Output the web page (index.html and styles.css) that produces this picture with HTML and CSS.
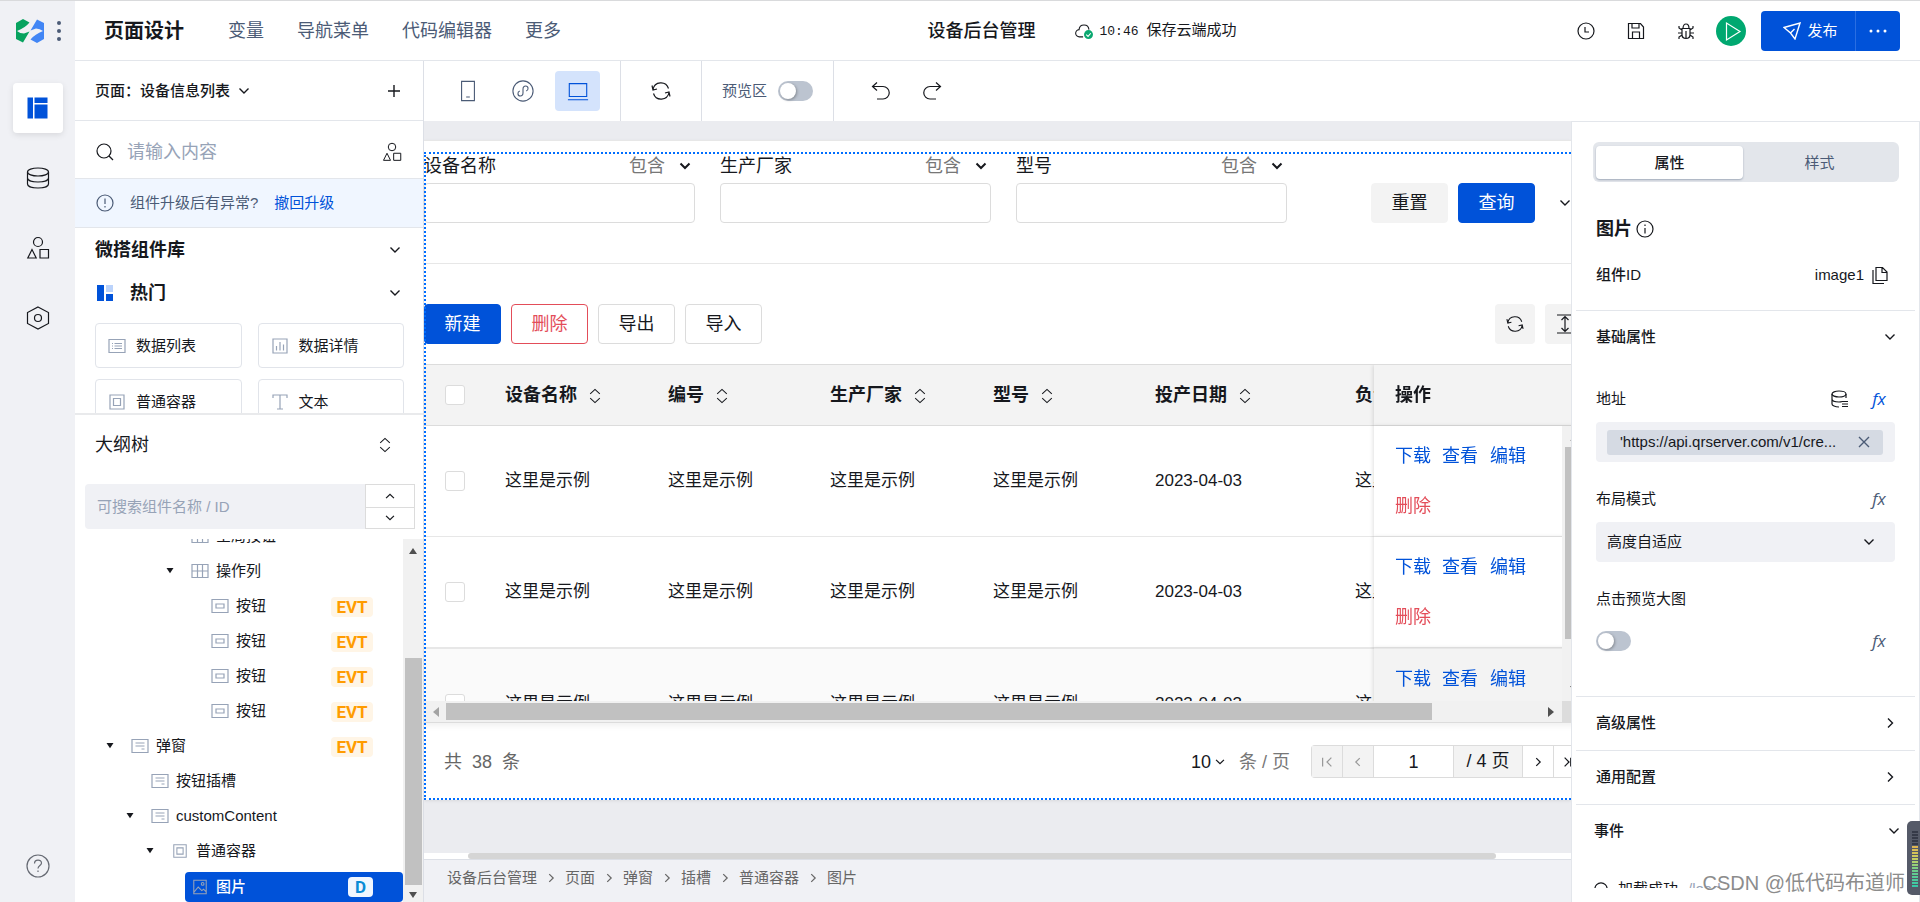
FILE: index.html
```html
<!DOCTYPE html>
<html lang="zh-CN">
<head>
<meta charset="utf-8">
<title>设备后台管理 - 页面设计</title>
<link rel="stylesheet" href="styles.css">
</head>
<body>
<svg class="sprite" aria-hidden="true">
  <symbol id="chev-down" viewBox="0 0 16 16"><path d="M3.500 5.500 8 10l4.500-4.500"/></symbol>
  <symbol id="chev-up" viewBox="0 0 16 16"><path d="M3.500 10.500 8 6l4.500 4.500"/></symbol>
  <symbol id="chev-right" viewBox="0 0 16 16"><path d="M6 3.500 10.500 8 6 12.500"/></symbol>
  <symbol id="chev-left" viewBox="0 0 16 16"><path d="M10 3.500 5.500 8l4.500 4.500"/></symbol>
  <symbol id="sort" viewBox="0 0 16 18"><path d="M2.500 6.500 8 1.500l5.500 5M2.500 11.500 8 16.500l5.500-5"/></symbol>
  <symbol id="shapes" viewBox="0 0 24 24"><circle cx="12" cy="6" r="4.500"/><path d="M6 13.500 1.800 22h8.400zM14 13.500h8.500V22H14z"/></symbol>
  <symbol id="refresh" viewBox="0 0 20 20"><path d="M2 8.500A8 8 0 0 1 17.500 7.500M18 11.500A8 8 0 0 1 2.500 12.500M1 4.500l1 4.500 4-1M19 15.500l-1-4.500-4 1"/></symbol>
  <symbol id="caret" viewBox="0 0 10 8"><path d="M1 1h8L5 7z"/></symbol>
  <symbol id="t-grid" viewBox="0 0 18 16"><path d="M1 1.500h16v13H1zM1 8h16M6.500 1.500v13M11.500 1.500v13"/></symbol>
  <symbol id="t-button" viewBox="0 0 18 16"><path d="M1 1.500h16v13H1zM5 6h8v4H5z"/></symbol>
  <symbol id="t-slot" viewBox="0 0 18 16"><path d="M1 1.500h16v13H1zM4.500 5h9M4.500 8h9M10.500 11h3"/></symbol>
  <symbol id="t-box" viewBox="0 0 18 18"><path d="M2 2h14v14H2zM5.500 5.500h7v7h-7z"/></symbol>
  <symbol id="t-image" viewBox="0 0 18 18"><path d="M2 1.500h14v15H2zM2 15l5-6 4 4 2-1.500 3 3"/><circle cx="12" cy="5.500" r="1.500"/></symbol>
</svg>

<div class="app">
  <nav class="rail" aria-label="主导航">
    <div class="rail-brand">
      <svg class="logo" viewBox="0 0 28 24"><path fill="#07a35f" d="M0 4 7 0l6.500 3.500Q9 9 1 12q3 2.500 7 2.500l5.500-2L7 23.500 0 20z"/><path fill="#4286f5" d="M28 20l-7 4-6.500-3.500Q19 15 27 12q-3-2.500-7-2.500l-5.500 2L21 .500 28 4z"/></svg>
      <svg class="dots" viewBox="0 0 4 22"><circle cx="2" cy="3" r="2"/><circle cx="2" cy="11" r="2"/><circle cx="2" cy="19" r="2"/></svg>
    </div>
    <button class="rail-btn is-active" aria-label="页面"><svg viewBox="0 0 24 24"><path class="fill-blue" d="M1.500 1.500H7v21H1.500zM8.500 8.500h13v14h-13zM8.500 1.500h13V7h-13z"/></svg></button>
    <button class="rail-btn" aria-label="数据"><svg viewBox="0 0 24 24"><ellipse cx="12" cy="6" rx="10.500" ry="4"/><path d="M1.500 6v12c0 5.300 21 5.300 21 0V6M1.500 12c0 5.300 21 5.300 21 0"/></svg></button>
    <button class="rail-btn" aria-label="组件"><svg><use href="#shapes"/></svg></button>
    <button class="rail-btn" aria-label="设置"><svg viewBox="0 0 24 24"><path d="M12 1l10.500 5.500v11L12 23 1.500 17.500v-11z"/><circle cx="12" cy="12" r="3.500"/></svg></button>
    <button class="rail-btn rail-help" aria-label="帮助"><svg viewBox="0 0 24 24"><circle cx="12" cy="12" r="11"/><path d="M8.500 9.500c0-4.500 7-4.500 7-.500 0 2.500-3.500 2.500-3.500 5.500M12 16.500V18"/></svg></button>
  </nav>

  <div class="main">
    <header class="topbar">
      <h1>页面设计</h1>
      <nav class="menu"><a href="#">变量</a><a href="#">导航菜单</a><a href="#">代码编辑器</a><a href="#">更多</a></nav>
      <strong class="app-name">设备后台管理</strong>
      <div class="saved">
        <svg viewBox="0 0 20 18"><path d="M9 15.500H5a4 4 0 0 1-.500-8C5 .500 15 .500 15.500 7.500"/><circle class="fill-green" cx="15" cy="13" r="5"/><path class="stroke-white" d="M12.500 13l2 2 3-3.500"/></svg>
        <span><span class="time">10:46</span>保存云端成功</span>
      </div>
      <div class="tools">
        <button class="tool" aria-label="历史"><svg viewBox="0 0 18 18"><circle cx="9" cy="9" r="8"/><path d="M8 5v5h4"/></svg></button>
        <button class="tool" aria-label="保存"><svg viewBox="0 0 18 18"><path d="M1.500 1.500h12L16.500 5v11.500h-15zM5 1.500V6h7V1.500M5.500 16.500V10h7v6.500"/></svg></button>
        <button class="tool" aria-label="调试"><svg viewBox="0 0 18 18"><path d="M5 6.500h8v6c0 5.300-8 5.300-8 0zM6 6.500c0-6 6-6 6 0M9 9v7M5 8 2 6V4M13 8l3-2V4M5 11H1M13 11h4M5 13l-3 2v2M13 13l3 2v2"/></svg></button>
        <button class="play" aria-label="预览"><svg viewBox="0 0 30 30"><path d="M10.500 7v17L24 15.500z"/></svg></button>
        <div class="publish">
          <button class="publish-main"><svg viewBox="0 0 18 18"><path d="M1 5.500 17 1l-5 16-4.500-6zM7.500 11l4-4"/></svg>发布</button>
          <button class="publish-more" aria-label="更多操作"><svg viewBox="0 0 18 4"><circle cx="2" cy="2" r="1.500"/><circle cx="9" cy="2" r="1.500"/><circle cx="16" cy="2" r="1.500"/></svg></button>
        </div>
      </div>
    </header>

    <div class="workspace">
      <aside class="left">
        <div class="page-pick">
          <button class="page-name">页面：设备信息列表 <svg class="ic"><use href="#chev-down"/></svg></button>
          <button aria-label="新建页面"><svg class="ic" viewBox="0 0 16 16"><path d="M8 2v12M2 8h12"/></svg></button>
        </div>
        <div class="search">
          <svg class="ic-18" viewBox="0 0 18 18"><circle cx="8" cy="8" r="7"/><path d="m13 13 4 4"/></svg>
          <input type="text" aria-label="搜索组件" placeholder="请输入内容">
          <button aria-label="组件分类"><svg class="ic-20"><use href="#shapes"/></svg></button>
        </div>
        <div class="notice">
          <svg class="ic-18" viewBox="0 0 18 18"><circle cx="9" cy="9" r="8"/><path d="M9 4.500V10M9 12v1.500"/></svg>
          <span>组件升级后有异常?</span><a href="#">撤回升级</a>
        </div>
        <section class="library">
          <button class="lib-head">微搭组件库<svg class="ic"><use href="#chev-down"/></svg></button>
          <button class="lib-head"><svg class="hot" viewBox="0 0 16 16"><path fill="#0052d9" d="M0 0h7v16H0zM9 9h7v7H9z"/><path fill="#bbd3fb" d="M9 0h7v7H9z"/></svg>热门<svg class="ic"><use href="#chev-down"/></svg></button>
          <div class="cards">
            <button class="card"><svg viewBox="0 0 18 18"><path d="M1 2.500h16v13H1zM4 6.500h1M4 9h1M4 11.500h1M6.500 6.500H14M6.500 9H14M6.500 11.500H14"/></svg>数据列表</button>
            <button class="card"><svg viewBox="0 0 18 18"><path d="M2 2h14v14H2zM5.500 9v4.500M9 5v8.500M12.500 7.500v6"/></svg>数据详情</button>
            <button class="card"><svg><use href="#t-box"/></svg>普通容器</button>
            <button class="card"><svg viewBox="0 0 18 18"><path d="M2 5V2h14v3M9 2v14M6 16h6"/></svg>文本</button>
          </div>
        </section>
        <section class="outline">
          <div class="outline-head"><h2>大纲树</h2><button aria-label="展开"><svg class="sort"><use href="#sort"/></svg></button></div>
          <div class="outline-search">
            <input type="text" aria-label="搜索大纲树" placeholder="可搜索组件名称 / ID">
            <div class="stepper"><button aria-label="上一个"><svg class="ic-14"><use href="#chev-up"/></svg></button><button aria-label="下一个"><svg class="ic-14"><use href="#chev-down"/></svg></button></div>
          </div>
          <div class="tree-wrap">
            <ul class="tree">
              <li class="lv3"><svg class="caret"><use href="#caret"/></svg><svg class="node"><use href="#t-grid"/></svg>全局按钮</li>
              <li class="lv3"><svg class="caret"><use href="#caret"/></svg><svg class="node"><use href="#t-grid"/></svg>操作列</li>
              <li class="lv4"><span class="caret"></span><svg class="node"><use href="#t-button"/></svg>按钮<b class="evt">EVT</b></li>
              <li class="lv4"><span class="caret"></span><svg class="node"><use href="#t-button"/></svg>按钮<b class="evt">EVT</b></li>
              <li class="lv4"><span class="caret"></span><svg class="node"><use href="#t-button"/></svg>按钮<b class="evt">EVT</b></li>
              <li class="lv4"><span class="caret"></span><svg class="node"><use href="#t-button"/></svg>按钮<b class="evt">EVT</b></li>
              <li class="lv0"><svg class="caret"><use href="#caret"/></svg><svg class="node"><use href="#t-slot"/></svg>弹窗<b class="evt">EVT</b></li>
              <li class="lv1"><span class="caret"></span><svg class="node"><use href="#t-slot"/></svg>按钮插槽</li>
              <li class="lv1"><svg class="caret"><use href="#caret"/></svg><svg class="node"><use href="#t-slot"/></svg>customContent</li>
              <li class="lv2"><svg class="caret"><use href="#caret"/></svg><svg class="node"><use href="#t-box"/></svg>普通容器</li>
              <li class="selected"><svg class="node"><use href="#t-image"/></svg>图片<b class="evt data">D</b></li>
            </ul>
            <div class="vbar" aria-hidden="true"><svg viewBox="0 0 10 8"><path d="M1 7h8L5 1z"/></svg><i></i><svg viewBox="0 0 10 8"><path d="M1 1h8L5 7z"/></svg></div>
          </div>
        </section>
      </aside>

      <div class="center-right">
        <div class="device-bar">
          <div class="group devices">
            <button aria-label="手机"><svg viewBox="0 0 24 24"><path d="M5 1.500h14v21H5zM10 18.500h4"/></svg></button>
            <button aria-label="小程序"><svg viewBox="0 0 24 24"><circle cx="12" cy="12" r="11"/><path d="M8.500 12c-3 1-2.500 5.500.500 5.500 2 0 3-1.500 3-3.500v-4c0-2 1-3.500 3-3.500 3 0 3.500 4.500.500 5.500"/></svg></button>
            <button class="is-active" aria-label="电脑"><svg viewBox="0 0 24 24"><path d="M2.500 4h19v14h-19zM1 21.500h22"/></svg></button>
          </div>
          <div class="group reload"><button aria-label="刷新"><svg class="ic-20"><use href="#refresh"/></svg></button></div>
          <div class="group preview"><label for="pv">预览区</label><input id="pv" class="switch" type="checkbox"></div>
          <div class="group history">
            <button aria-label="撤销"><svg class="ic-20" viewBox="0 0 20 20"><path d="M6 1.500 1.500 5.500 6 9.500M1.500 5.500h10.500a6 6 0 0 1 0 12.500H6"/></svg></button>
            <button aria-label="重做"><svg class="ic-20" viewBox="0 0 20 20"><path d="m14 1.500 4.500 4-4.500 4M18.500 5.500H8a6 6 0 0 0 0 12.500h6"/></svg></button>
          </div>
        </div>

        <div class="stage">
          <main class="canvas">
            <div class="sheet">
              <div class="sheet-in">
                <form class="filters">
                  <div class="field"><div class="field-top"><label for="f1">设备名称</label><span class="pick"><select aria-label="设备名称条件"><option>包含</option></select><svg class="ic"><use href="#chev-down"/></svg></span></div><input id="f1" type="text"></div>
                  <div class="field"><div class="field-top"><label for="f2">生产厂家</label><span class="pick"><select aria-label="生产厂家条件"><option>包含</option></select><svg class="ic"><use href="#chev-down"/></svg></span></div><input id="f2" type="text"></div>
                  <div class="field"><div class="field-top"><label for="f3">型号</label><span class="pick"><select aria-label="型号条件"><option>包含</option></select><svg class="ic"><use href="#chev-down"/></svg></span></div><input id="f3" type="text"></div>
                  <div class="filter-actions"><button type="button" class="btn muted">重置</button><button type="button" class="btn primary">查询</button><button type="button" class="more" aria-label="展开筛选"><svg class="ic"><use href="#chev-down"/></svg></button></div>
                </form>
                <div class="actions">
                  <button class="btn primary">新建</button><button class="btn danger">删除</button><button class="btn">导出</button><button class="btn">导入</button>
                  <button class="sq first" aria-label="刷新"><svg class="ic-18"><use href="#refresh"/></svg></button>
                  <button class="sq" aria-label="行高"><svg class="ic-20" viewBox="0 0 20 20"><path d="M2 1h16M2 19h16M10 3v14M6.500 6 10 2.500 13.500 6M6.500 14l3.500 3.500 3.500-3.500"/></svg></button>
                </div>
                <div class="table-box">
                  <table>
                    <colgroup><col class="c-check"><col class="c-a"><col class="c-b"><col class="c-a"><col class="c-b"><col class="c-date"><col class="c-b"><col class="c-op"></colgroup>
                    <thead><tr><th><input type="checkbox" aria-label="全选"></th><th>设备名称<svg class="sort"><use href="#sort"/></svg></th><th>编号<svg class="sort"><use href="#sort"/></svg></th><th>生产厂家<svg class="sort"><use href="#sort"/></svg></th><th>型号<svg class="sort"><use href="#sort"/></svg></th><th>投产日期<svg class="sort"><use href="#sort"/></svg></th><th>负责人</th><th class="op">操作</th></tr></thead>
                    <tbody>
                      <tr><td><input type="checkbox" aria-label="选择第1行"></td><td>这里是示例</td><td>这里是示例</td><td>这里是示例</td><td>这里是示例</td><td>2023-04-03</td><td>这里是示例</td><td class="op"><div class="links"><a href="#">下载</a><a href="#">查看</a><a href="#">编辑</a><a href="#" class="del">删除</a></div></td></tr>
                      <tr><td><input type="checkbox" aria-label="选择第2行"></td><td>这里是示例</td><td>这里是示例</td><td>这里是示例</td><td>这里是示例</td><td>2023-04-03</td><td>这里是示例</td><td class="op"><div class="links"><a href="#">下载</a><a href="#">查看</a><a href="#">编辑</a><a href="#" class="del">删除</a></div></td></tr>
                      <tr class="hover"><td><input type="checkbox" aria-label="选择第3行"></td><td>这里是示例</td><td>这里是示例</td><td>这里是示例</td><td>这里是示例</td><td>2023-04-03</td><td>这里是示例</td><td class="op"><div class="links"><a href="#">下载</a><a href="#">查看</a><a href="#">编辑</a><a href="#" class="del">删除</a></div></td></tr>
                    </tbody>
                  </table>
                  <div class="vbar table-vbar" aria-hidden="true"><svg class="dim" viewBox="0 0 10 8"><path d="M1 7h8L5 1z"/></svg><i></i><svg viewBox="0 0 10 8"><path d="M1 1h8L5 7z"/></svg></div>
                </div>
                <div class="hbar" aria-hidden="true"><svg class="dim" viewBox="0 0 8 10"><path d="M7 0v10L1 5z"/></svg><span class="track"><i></i></span><svg viewBox="0 0 8 10"><path d="M1 0v10l6-5z"/></svg><b></b></div>
                <div class="pager">
                  <span class="total">共&nbsp; 38 &nbsp;条</span>
                  <span class="pick size"><select aria-label="每页条数"><option>10</option></select><svg class="ic-14"><use href="#chev-down"/></svg></span>
                  <span class="unit">条 / 页</span>
                  <div class="pages">
                    <button disabled aria-label="首页"><svg class="ic-14" viewBox="0 0 16 16"><path d="M3 3v10M13 3 8 8l5 5"/></svg></button><button disabled aria-label="上一页"><svg class="ic-14"><use href="#chev-left"/></svg></button><input type="text" value="1" aria-label="页码"><span>/ 4 页</span><button aria-label="下一页"><svg class="ic-14"><use href="#chev-right"/></svg></button><button aria-label="末页"><svg class="ic-14" viewBox="0 0 16 16"><path d="M10 3v10M3 3l5 5-5 5"/></svg></button>
                  </div>
                </div>
              </div>
            </div>
            <div class="canvas-scroll" aria-hidden="true"><i></i></div>
            <nav class="crumbs" aria-label="组件路径"><a href="#">设备后台管理</a><svg class="ic-14"><use href="#chev-right"/></svg><a href="#">页面</a><svg class="ic-14"><use href="#chev-right"/></svg><a href="#">弹窗</a><svg class="ic-14"><use href="#chev-right"/></svg><a href="#">插槽</a><svg class="ic-14"><use href="#chev-right"/></svg><a href="#">普通容器</a><svg class="ic-14"><use href="#chev-right"/></svg><a href="#">图片</a></nav>
          </main>

          <aside class="props">
            <div class="tabs" role="tablist"><button role="tab" aria-selected="true" class="is-active">属性</button><button role="tab" aria-selected="false">样式</button></div>
            <h2>图片<svg class="ic-18" viewBox="0 0 18 18"><circle cx="9" cy="9" r="8"/><path d="M9 4.500V6M9 8v5.500"/></svg></h2>
            <div class="id-row"><b>组件ID</b><span>image1</span><button aria-label="复制"><svg class="ic-18" viewBox="0 0 18 18"><path d="M5 1.500h6.500L16 6v8.500H5zM11 1.500V6.500h5M2 4v13.500h11"/></svg></button></div>
            <section class="basic">
              <button class="sec-head">基础属性<svg class="ic"><use href="#chev-down"/></svg></button>
              <div class="prop-top first"><span>地址</span><button aria-label="选择数据"><svg class="ic-18" viewBox="0 0 18 18"><ellipse cx="8" cy="4" rx="7" ry="3"/><path d="M1 4v10c0 1.500 3 3 7 3M15 4v4M1 9c0 2 3 3 7 3 1 0 2 0 3-.500M11 11.500h6M11 14h6M11 16.500h6"/></svg></button><button class="fx on" aria-label="表达式">fx</button></div>
              <div class="box"><span class="tag"><span>'https://api.qrserver.com/v1/cre...</span><button aria-label="清除"><svg class="ic-14" viewBox="0 0 14 14"><path d="m2 2 10 10M12 2 2 12"/></svg></button></span></div>
              <div class="prop-top"><label for="mode">布局模式</label><button class="fx" aria-label="表达式">fx</button></div>
              <span class="pick box wide"><select id="mode"><option>高度自适应</option></select><svg class="ic"><use href="#chev-down"/></svg></span>
              <div class="prop-top"><label for="zoom">点击预览大图</label></div>
              <div class="switch-row"><input id="zoom" class="switch" type="checkbox"><button class="fx" aria-label="表达式">fx</button></div>
            </section>
            <button class="sec-head line">高级属性<svg class="ic"><use href="#chev-right"/></svg></button>
            <button class="sec-head line">通用配置<svg class="ic"><use href="#chev-right"/></svg></button>
            <section class="events">
              <button class="sec-head">事件<svg class="ic"><use href="#chev-down"/></svg></button>
              <div class="event-clip"><div class="event"><svg class="ic-14" viewBox="0 0 16 16"><circle cx="8" cy="8" r="7"/></svg>加载成功 <span>/load</span></div></div>
            </section>
          </aside>
        </div>
      </div>
    </div>
  </div>
</div>
<div class="watermark">CSDN @低代码布道师</div>
<div class="meter" aria-hidden="true"></div>
</body>
</html>
```
FILE: styles.css
```css
* { box-sizing: border-box; }
body {
  margin: 0;
  height: 100vh;
  overflow: hidden;
  position: relative;
  font: 15px/20px "Liberation Sans", "Noto Sans CJK SC", sans-serif;
  color: #16181d;
  background: #fff;
}
button, input, select { font: inherit; color: inherit; margin: 0; }
button { border: 0; background: none; padding: 0; display: flex; align-items: center; cursor: pointer; }
a { color: inherit; text-decoration: none; }
h1, h2, ul { margin: 0; padding: 0; }
svg { display: block; fill: none; stroke: currentColor; stroke-width: 1.2; flex: none; }
.sprite { display: none; }
.ic { width: 16px; height: 16px; stroke-width: 1.4; }
.ic-14 { width: 14px; height: 14px; stroke-width: 1.4; }
.ic-18 { width: 18px; height: 18px; }
.ic-20 { width: 20px; height: 20px; }
.sort { width: 14px; height: 18px; }
.fill-blue { fill: #0052d9; stroke: none; }
.fill-green { fill: #0aa870; stroke: none; }
.stroke-white { stroke: #fff; }

.app { display: flex; height: 100%; border-top: 1px solid #d9dadc; }

/* icon rail */
.rail { width: 75px; background: #f0f1f5; display: flex; flex-direction: column; align-items: center; gap: 20px; flex: none; padding-bottom: 11px; }
.rail-brand { display: flex; align-items: center; gap: 13px; height: 60px; padding-left: 2px; }
.logo { width: 28px; height: 24px; stroke: none; }
.dots { width: 4px; height: 22px; fill: #4b5b76; stroke: none; }
.rail-btn { width: 50px; height: 50px; justify-content: center; border-radius: 4px; }
.rail-btn svg { width: 24px; height: 24px; }
.rail-btn.is-active { background: #fff; box-shadow: 0 2px 6px rgba(0, 0, 0, .1); margin-top: 2px; }
.rail-help { margin-top: auto; color: #666a73; }

.main { flex: 1; min-width: 0; display: flex; flex-direction: column; }
.topbar { height: 60px; flex: none; border-bottom: 1px solid #e3e6eb; display: flex; align-items: center; padding: 0 20px 0 29px; }
h1 { font-size: 20px; line-height: 28px; }
.menu { display: flex; gap: 33px; margin-left: 44px; font-size: 18px; color: #4b5b76; flex: 1; }
.app-name { font-size: 18px; font-weight: 500; margin-left: 36px; }
.saved { display: flex; align-items: center; gap: 6px; margin-left: 40px; }
.saved svg { width: 18px; height: 18px; }
.saved .time { font-family: "Liberation Mono", monospace; margin-right: 8px; font-size: 13px; }
.tools { display: flex; align-items: center; flex: 1; justify-content: flex-end; }
.tool { width: 50px; height: 40px; justify-content: center; }
.tool svg { width: 18px; height: 18px; }
.play { width: 30px; height: 30px; border-radius: 50%; background: #00a870; color: #fff; margin: 0 15px 0 5px; }
.play svg { width: 30px; height: 30px; }
.publish { display: flex; height: 40px; border-radius: 4px; background: #0052d9; color: #fff; }
.publish-main { width: 95px; justify-content: center; gap: 6px; padding-left: 5px; border-right: 1px solid #2a6ee2; }
.publish-main svg { width: 18px; height: 18px; stroke-width: 1.4; }
.publish-more { width: 44px; justify-content: center; }
.publish-more svg { width: 18px; height: 4px; fill: #fff; stroke: none; }

.workspace { flex: 1; min-height: 0; display: flex; }

/* left panel */
.left { width: 349px; flex: none; border-right: 1px solid #dcdfe6; display: flex; flex-direction: column; }
.page-pick { height: 60px; flex: none; border-bottom: 1px solid #e3e6eb; display: flex; align-items: center; justify-content: space-between; padding: 0 21px 0 20px; }
.page-name { gap: 6px; font-weight: 500; }
.search { height: 58px; flex: none; border-bottom: 1px solid #e3e6eb; display: flex; align-items: center; gap: 13px; padding: 5px 21px 0; }
.search input { flex: 1; min-width: 0; border: 0; padding: 0; outline: 0; background: none; font-size: 18px; }
input::placeholder { color: #97a3b7; opacity: 1; }
.notice { height: 49px; flex: none; border-bottom: 1px solid #e3e6eb; background: #f0f6ff; display: flex; align-items: center; gap: 16px; padding: 0 21px; color: #4b5b76; }
.notice a { color: #0052d9; }
.library { height: 187px; flex: none; overflow: hidden; padding: 0 19px 0 20px; border-bottom: 2px solid #e9eaec; }
.lib-head { width: 100%; height: 43px; font-size: 18px; font-weight: 700; gap: 17px; padding: 0 1px 0 0; }
.lib-head .ic { margin-left: auto; }
.hot { width: 16px; height: 16px; stroke: none; margin-left: 2px; }
.cards { display: grid; grid-template-columns: 1fr 1fr; gap: 11px 16px; padding-top: 9px; }
.card { height: 45px; border: 1px solid #e1e4ea; border-radius: 4px; padding-left: 12px; gap: 10px; }
.card svg { width: 18px; height: 18px; color: #97a3b7; }
.outline { flex: 1; min-height: 0; display: flex; flex-direction: column; }
.outline-head { display: flex; align-items: center; justify-content: space-between; height: 60px; flex: none; padding: 0 31px 0 20px; }
.outline-head h2 { font-size: 18px; font-weight: 400; }
.outline-search { display: flex; height: 45px; flex: none; margin: 9px 8px 10px 10px; }
.outline-search input { flex: 1; min-width: 0; border: 0; background: #f0f1f5; border-radius: 4px 0 0 4px; padding: 0 12px; }
.stepper { width: 50px; display: grid; grid-template-rows: 1fr 1fr; border: 1px solid #dcdcdc; }
.stepper button { justify-content: center; }
.stepper button + button { border-top: 1px solid #dcdcdc; }
.tree-wrap { flex: 1; min-height: 0; display: flex; overflow: hidden; }
.tree { list-style: none; flex: 1; display: flex; flex-direction: column; margin-top: -21px; }
.tree li { display: flex; align-items: center; height: 35px; flex: none; }
.tree .lv0 { padding-left: 25px; }
.tree .lv1 { padding-left: 45px; }
.tree .lv2 { padding-left: 65px; }
.tree .lv3 { padding-left: 85px; }
.tree .lv4 { padding-left: 105px; }
.caret { width: 20px; height: 7px; margin-right: 11px; fill: #16181d; stroke: none; }
.node { width: 18px; height: 16px; margin-right: 7px; color: #97a3b7; }
.evt { margin: 2px 30px 0 auto; width: 42px; height: 20px; border-radius: 4px; background: #fff5e6; color: #ff9c00; font: 700 17px/20px Roboto, sans-serif; text-align: center; }
.tree .selected { background: #0052d9; color: #fff; height: 30px; margin: 4px 0 0 110px; border-radius: 4px; padding-left: 6px; font-weight: 500; }
.evt.data { width: 25px; background: #f0f6ff; color: #0a8bd6; margin-top: 0; }
.vbar { width: 20px; background: #f1f1f1; display: flex; flex-direction: column; align-items: center; padding: 8px 0 3px; flex: none; }
.vbar svg { width: 10px; height: 8px; fill: #505050; stroke: none; }
.vbar svg.dim, .hbar svg.dim { fill: #a3a3a3; }
.vbar i { width: 17px; flex: 1; background: #c1c1c1; margin: 103px 0 6px; }

/* device toolbar */
.center-right { flex: 1; min-width: 0; display: flex; flex-direction: column; }
.device-bar { height: 60px; flex: none; display: flex; }
.group { display: flex; align-items: center; border-right: 1px solid #dcdfe6; }
.devices { width: 197px; gap: 10px; padding-left: 21px; color: #4b5b76; }
.devices button { width: 45px; height: 40px; border-radius: 4px; justify-content: center; }
.devices svg { width: 22px; height: 24px; }
.devices .is-active { background: #d4e3fc; color: #0052d9; }
.reload { width: 81px; justify-content: center; }
.preview { width: 132px; gap: 11px; padding-left: 20px; color: #4b5b76; }
.history { gap: 31px; padding-left: 37px; border: 0; }
.switch { appearance: none; width: 35px; height: 20px; border-radius: 10px; background: #bcc4d0; padding: 2px; display: flex; }
.switch::before { content: ""; width: 16px; height: 16px; border-radius: 50%; background: #fff; box-shadow: 1px 1px 3px rgba(0, 0, 0, .3); }

.stage { flex: 1; min-height: 0; display: flex; }
.canvas { flex: 1; min-width: 0; display: flex; flex-direction: column; background: #ebecf0; overflow: hidden; }
.sheet { margin-top: 19px; background: #fff; border-top: 1px solid #e7e7e7; padding-top: 12px; overflow: hidden; position: relative; flex: none; box-shadow: 0 1px 3px rgba(0, 0, 0, .08); }
/* selection outline over the sheet */
.sheet::after { content: ""; position: absolute; inset: 11px 0 0 0; border: 2px dotted #006eff; border-right: 0; pointer-events: none; }
.sheet-in { margin-right: -14px; font-size: 17px; }
.filters { display: flex; gap: 25px; padding-bottom: 40px; border-bottom: 1px solid #e7e7e7; }
.field { flex: 0 1 271px; display: flex; flex-direction: column; gap: 5px; }
.field-top { display: flex; justify-content: space-between; height: 25px; align-items: center; }
.field-top label { font-size: 18px; }
.field input { width: 100%; height: 40px; border: 1px solid #dcdcdc; border-radius: 4px; padding: 0 12px; }
.pick { display: grid; grid-template-columns: 1fr auto; align-items: center; color: #16181d; }
.pick select { appearance: none; border: 0; background: none; padding: 0; grid-area: 1 / 1 / 2 / 3; outline: 0; }
.pick svg { grid-area: 1 / 2; pointer-events: none; }
.field-top .pick { width: 66px; padding-right: 2px; font-size: 18px; }
.field-top select { color: #777; }
.field-top svg { stroke-width: 2; }
.filter-actions { display: flex; gap: 10px; margin: 30px 0 0 auto; }
.btn { width: 77px; height: 40px; border: 1px solid #dcdcdc; border-radius: 4px; justify-content: center; background: #fff; font-size: 18px; }
.btn.primary { background: #0052d9; border-color: #0052d9; color: #fff; }
.btn.muted { background: #f3f3f3; border-color: #f3f3f3; }
.btn.danger { color: #e34d59; border-color: #e34d59; }
.more { width: 40px; height: 40px; justify-content: center; }
.actions { display: flex; gap: 10px; padding: 40px 0 20px; }
.sq { width: 40px; height: 40px; background: #f3f3f3; border-radius: 4px; justify-content: center; }
.sq.first { margin-left: auto; }

.table-box { height: 337px; overflow: hidden; border-top: 1px solid #dcdcdc; position: relative; }
table { table-layout: fixed; border-collapse: separate; border-spacing: 0; width: 1288px; min-width: 100%; }
.c-check { width: 65px; }
.c-a { width: 163px; }
.c-b { width: 162px; }
.c-date { width: 200px; }
.c-op { width: 211px; }
th, td { text-align: left; padding: 0 0 0 16px; white-space: nowrap; border-bottom: 1px solid #e7e7e7; background: #fff; overflow: hidden; }
th { height: 61px; background: #f3f3f3; border-bottom-color: #dcdcdc; font-weight: 700; font-size: 18px; }
td { height: 111px; }
tr > :first-child { padding-left: 21px; }
th .sort { display: inline-block; vertical-align: middle; margin-left: 11px; }
table input { appearance: none; display: block; width: 20px; height: 20px; border: 1px solid #dcdcdc; border-radius: 3px; background: #fff; }
.hover td { background: #fafafa; border-top: 1px solid #e7e7e7; }
.hover .op { background: #f3f3f3; }
.op { position: sticky; right: 0; padding-left: 21px; box-shadow: -1px 0 4px rgba(0, 0, 0, .12); overflow: visible; }
.links { display: grid; grid-template-columns: 47px 48px 48px; gap: 30px 0; color: #0052d9; font-size: 18px; }
.del { color: #e34d59; }
.table-vbar { position: absolute; top: 61px; right: 0; bottom: 0; padding: 8px 0; width: 23px; }
.table-vbar i { margin: 5px 0 46px; }
.hbar { display: flex; align-items: center; height: 22px; background: #f1f1f1; border-bottom: 1px solid #dcdcdc; box-shadow: 0 3px 6px rgba(0, 0, 0, .06); padding-left: 8px; }
.hbar svg { width: 8px; height: 10px; fill: #505050; stroke: none; }
.track { flex: 1; margin: 0 5px 0 6px; }
.track i { display: block; width: 90%; height: 17px; background: #c1c1c1; }
.hbar b { width: 23px; height: 21px; background: #dcdcdc; margin-left: 7px; }
.pager { display: flex; align-items: center; height: 77px; padding-left: 20px; font-size: 18px; }
.total { margin-right: auto; color: #666; }
.size { width: 36px; }
.unit { color: #777; margin: 0 21px 0 12px; }
.pages { display: flex; height: 33px; border: 1px solid #dcdcdc; border-right: 0; border-radius: 4px 0 0 4px; }
.pages > * { width: 31px; border: 0; border-right: 1px solid #dcdcdc; justify-content: center; }
.pages input { width: 80px; text-align: center; padding: 0; }
.pages span { width: 69px; background: #f3f3f3; line-height: 31px; text-align: center; }
.pages button:disabled { background: #f3f3f3; color: #999; }
.canvas-scroll { margin-top: auto; height: 6px; background: #fff; padding: 0 75px 0 44px; flex: none; }
.canvas-scroll i { display: block; height: 6px; border-radius: 3px; background: #d5d5d5; }
.crumbs { height: 43px; flex: none; background: #f0f1f5; border-top: 1px solid #dcdfe6; display: flex; align-items: center; gap: 7px; padding: 0 23px 6px; color: #666; }

/* property panel */
.props { width: 349px; flex: none; border: 1px solid #e3e6eb; border-bottom: 0; padding: 20px 4px 0; }
.tabs { display: flex; margin: 0 16px 0 17px; height: 40px; border-radius: 6px; background: #e3e6eb; padding: 4px 3px 3px; }
.tabs button { flex: 1; justify-content: center; border-radius: 4px; color: #4b5b76; }
.tabs .is-active { flex: 0 0 147px; background: #fff; color: #16181d; font-weight: 500; box-shadow: 0 1px 2px rgba(60, 80, 110, .4); }
.props h2 { display: flex; align-items: center; gap: 4px; font-size: 18px; height: 26px; margin: 34px 20px 0; }
.id-row { display: flex; align-items: center; margin: 23px 26px 25px 20px; }
.id-row b { font-weight: 500; margin-right: auto; }
.id-row button { margin-left: 7px; }
.basic { border-top: 1px solid #e3e6eb; height: 386px; }
.sec-head { width: 100%; height: 52px; padding: 0 17px 0 20px; justify-content: space-between; font-weight: 500; }
.sec-head.line { height: 54px; padding-bottom: 2px; border-top: 1px solid #e3e6eb; }
.prop-top { display: flex; align-items: center; gap: 19px; height: 24px; margin: 25px 25px 11px 20px; }
.prop-top.first { margin-top: 24px; }
.prop-top > :first-child { margin-right: auto; }
.fx { font: italic 17px/20px "Open Sans", sans-serif; color: #4b5b76; width: 22px; justify-content: center; }
.fx.on { color: #0052d9; }
.box { height: 40px; margin: 0 20px 0 20px; background: #f0f1f5; border-radius: 4px; padding: 0 12px 0 11px; display: flex; align-items: center; }
.tag { flex: 1; height: 25px; background: #d5dae3; border-radius: 3px; display: flex; align-items: center; justify-content: space-between; padding: 0 12px 0 13px; color: #16181d; }
.tag button { color: #4b5b76; }
.pick.wide { display: grid; padding-right: 18px; }
.pick.wide select { height: 40px; }
.switch-row { display: flex; justify-content: space-between; margin: 20px 25px 0 20px; }
.events { border-top: 1px solid #e3e6eb; }
.events .sec-head { padding: 0 13px 0 18px; }
.event-clip { height: 31px; overflow: hidden; }
.event { display: flex; align-items: center; gap: 10px; padding: 22px 0 0 18px; }
.event span { color: #97a3b7; }

.watermark { position: absolute; right: 15px; bottom: 4px; font-size: 20px; line-height: 30px; color: #8c8c8c; }
.meter { position: absolute; right: 0; bottom: 7px; width: 13px; height: 74px; border-radius: 5px 0 0 5px; background: #555a68; }
.meter::before { content: ""; display: block; width: 6px; height: 57px; margin: 9px 0 0 5px; background: repeating-linear-gradient(#555a68 0 1px, transparent 1px 3px), linear-gradient(#353a48 0 26%, #e0b450 28%, #c8d060 50%, #6fcf8a 70%, #35c8a8); }
```
